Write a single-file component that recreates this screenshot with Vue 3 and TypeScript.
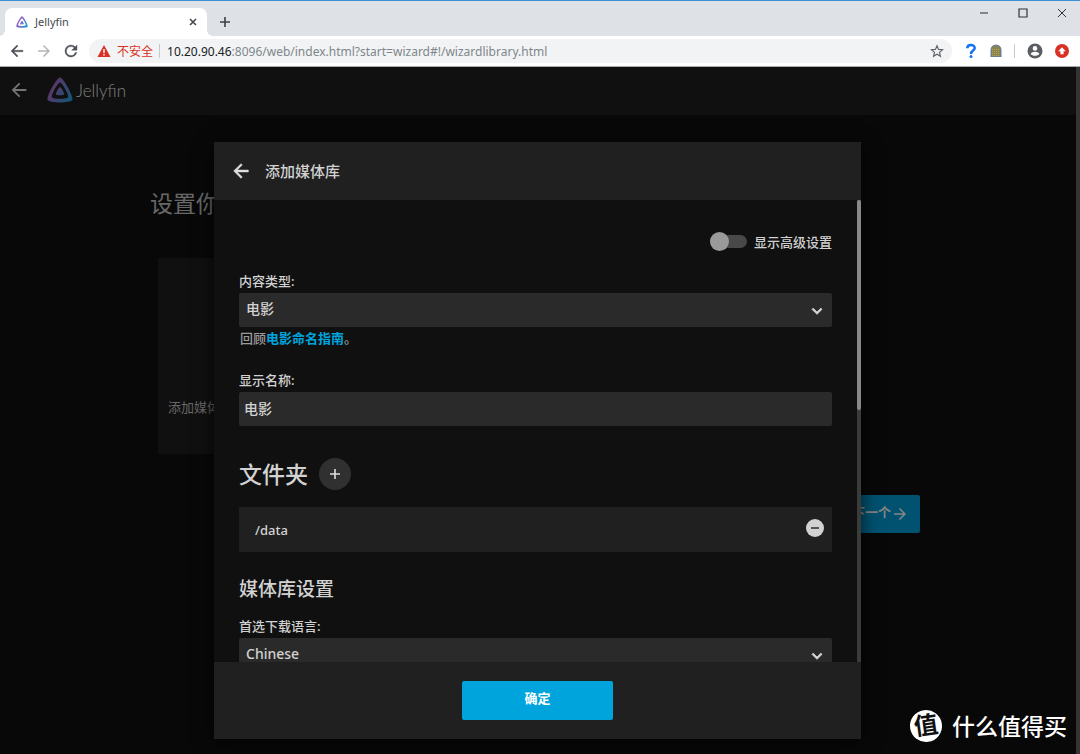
<script setup lang="ts">
import { ref } from 'vue'

const contentType = ref('电影')
const displayName = ref('电影')
const language = ref('Chinese')
const advanced = ref(false)
const folders = ref<string[]>(['/data'])

const arrow = 'M20 11H7.83l5.59-5.59L12 4l-8 8 8 8 1.41-1.41L7.83 13H20z'
const forward = 'M12 4l-1.41 1.41L16.17 11H4v2h12.17l-5.58 5.59L12 20l8-8z'
const chevron = 'M7.41 8.59 12 13.17l4.59-4.58L18 10l-6 6-6-6z'
const logoInner =
  'M190.56 329.07c8.63 17.3 122.4 17.12 130.93 0 8.52-17.1-47.9-119.78-65.46-119.8-17.57 0-74.1 102.5-65.47 119.8z'
const logoOuter =
  'M58.75 417.03c25.97 52.15 368.86 51.55 394.55 0S308.93 56.08 256.03 56.08c-52.92 0-223.25 308.8-197.28 360.95zm68.04-45.25c-17.02-34.17 94.6-236.5 129.26-236.5 34.67 0 146.1 202.7 129.26 236.5-16.83 33.8-241.5 34.17-258.52 0z'
</script>

<template>
  <div class="window">
    <header class="tabstrip">
      <div class="tab">
        <svg class="favicon" viewBox="48 48 416 416" aria-hidden="true">
          <defs>
            <linearGradient id="brand" gradientUnits="userSpaceOnUse" x1="110" y1="213" x2="497" y2="437">
              <stop offset="0" stop-color="#aa5cc3" />
              <stop offset="1" stop-color="#00a4dc" />
            </linearGradient>
          </defs>
          <path :d="logoInner" fill="url(#brand)" />
          <path :d="logoOuter" fill="url(#brand)" />
        </svg>
        <span class="tab-title">Jellyfin</span>
        <button class="icon-btn" aria-label="关闭标签页">
          <svg width="10" height="10" viewBox="0 0 10 10"><path d="M2 2l6 6M8 2L2 8" stroke="#45484c" stroke-width="1.6" /></svg>
        </button>
      </div>
      <button class="icon-btn new-tab" aria-label="新标签页">
        <svg width="12" height="12" viewBox="0 0 12 12"><path d="M6 1v10M1 6h10" stroke="#3c4043" stroke-width="1.6" /></svg>
      </button>
      <div class="window-controls">
        <button class="icon-btn" aria-label="最小化"><svg width="10" height="10" viewBox="0 0 10 10"><path d="M1 5h8" stroke="#666" stroke-width="1.5" /></svg></button>
        <button class="icon-btn" aria-label="最大化"><svg width="10" height="10" viewBox="0 0 10 10"><path d="M1 1h8v8H1z" fill="none" stroke="#333" stroke-width="1.2" /></svg></button>
        <button class="icon-btn" aria-label="关闭"><svg width="10" height="10" viewBox="0 0 10 10"><path d="M1 1l8 8M9 1L1 9" stroke="#333" /></svg></button>
      </div>
    </header>

    <nav class="toolbar">
      <button class="icon-btn" aria-label="后退"><svg width="18" height="18" viewBox="0 0 24 24"><path :d="arrow" fill="#4d5156" stroke="#4d5156" stroke-width=".5" /></svg></button>
      <button class="icon-btn" aria-label="前进"><svg width="18" height="18" viewBox="0 0 24 24"><path :d="forward" fill="#b4b6b9" /></svg></button>
      <button class="icon-btn" aria-label="重新加载"><svg width="18" height="18" viewBox="0 0 24 24"><path d="M17.65 6.35A7.96 7.96 0 0 0 12 4a8 8 0 1 0 7.73 10h-2.08A6 6 0 1 1 12 6c1.66 0 3.14.69 4.22 1.78L13 11h7V4z" fill="#4d5156" stroke="#4d5156" stroke-width=".5" /></svg></button>
      <div class="omnibox">
        <svg width="14" height="14" viewBox="0 0 14 14" aria-hidden="true"><path d="M7 1l6.500 12H.5z" fill="#d93025" /><path d="M7 5v4M7 10v1.500" stroke="#fff" stroke-width="1.4" /></svg>
        <span class="insecure">不安全</span>
        <span class="divider"></span>
        <span class="url"><b>10.20.90.46</b>:8096/web/index.html?start=wizard#!/wizardlibrary.html</span>
        <button class="icon-btn" aria-label="收藏">
          <svg width="14" height="14" viewBox="0 0 24 24"><path d="M12 3l2.600 6.200 6.900.600-5.200 4.500 1.600 6.700-5.900-3.600L6.100 21l1.600-6.700L2.500 9.800l6.900-.600z" fill="none" stroke="#5f6368" stroke-width="2" /></svg>
        </button>
      </div>
      <div class="extensions">
        <button class="icon-btn" aria-label="帮助">
          <svg width="14" height="16" viewBox="0 0 14 16"><path d="M3.300 5.200C3.300 1 10.700 1 10.700 5.100 10.700 7.600 7 7.700 7 11" fill="none" stroke="#1473f5" stroke-width="2.500" /><circle cx="7" cy="13.500" r="1.500" fill="#1473f5" /></svg>
        </button>
        <button class="icon-btn" aria-label="扩展程序">
          <svg width="12" height="14" viewBox="0 0 12 14"><path d="M.5 13V6a5.500 5.500 0 0 1 11 0v7z" fill="#6e7f8c" /><path d="M2 12V6a4 4 0 0 1 8 0v6z" fill="#8b8550" /><path d="M2 5.500h8M2 7.500h8M2 9.500h8M2 11.500h8" stroke="#b5a254" stroke-dasharray="1 1" /></svg>
        </button>
        <span class="divider"></span>
        <button class="icon-btn" aria-label="用户">
          <svg width="16" height="16" viewBox="0 0 16 16"><circle cx="8" cy="8" r="7.500" fill="#5a5e63" /><circle cx="8" cy="5.400" r="2.300" fill="#fff" /><path d="M3.600 10.800c1.300-2.900 7.500-2.900 8.800 0-1.900 2.700-6.900 2.700-8.800 0z" fill="#fff" /></svg>
        </button>
        <button class="icon-btn" aria-label="更新">
          <svg width="14" height="14" viewBox="0 0 14 14"><circle cx="7" cy="7" r="7" fill="#d93025" /><path d="M7 3.300l3.800 3.900H8.600v3.100H5.400V7.200H3.200z" fill="#fff" /></svg>
        </button>
      </div>
    </nav>

    <div class="page">
      <div class="app-bar">
        <button class="icon-btn" aria-label="返回"><svg width="22" height="22" viewBox="0 0 24 24"><path :d="arrow" fill="#747474" /></svg></button>
        <svg class="brand-logo" viewBox="48 48 416 416" aria-hidden="true">
          <path :d="logoInner" fill="url(#brand)" />
          <path :d="logoOuter" fill="url(#brand)" />
        </svg>
        <span class="brand-name">Jellyfin</span>
      </div>
      <main class="wizard">
        <h1>设置你的媒体库</h1>
        <button class="card">添加媒体库</button>
        <button class="next"><span>下一个</span><svg width="18" height="18" viewBox="0 0 24 24"><path :d="forward" fill="#868686" /></svg></button>
      </main>

      <div class="backdrop">
        <section class="dialog" role="dialog" aria-labelledby="dialog-title">
          <header class="dialog-head">
            <button class="icon-btn" aria-label="返回"><svg width="22" height="22" viewBox="0 0 24 24"><path :d="arrow" fill="#dedede" stroke="#dedede" stroke-width=".6" /></svg></button>
            <h2 id="dialog-title">添加媒体库</h2>
          </header>

          <div class="scroller">
            <form class="form" @submit.prevent>
              <label class="toggle">
                <input v-model="advanced" type="checkbox" />
                <span class="switch"></span>
                显示高级设置
              </label>

              <div class="field">
                <label for="type">内容类型:</label>
                <div class="select">
                  <select id="type" v-model="contentType"><option>电影</option></select>
                  <svg width="20" height="20" viewBox="0 0 24 24"><path :d="chevron" fill="#d5d5d5" stroke="#d5d5d5" /></svg>
                </div>
                <p class="hint">回顾<a href="#naming">电影命名指南</a>。</p>
              </div>

              <div class="field name-field">
                <label for="name">显示名称:</label>
                <input id="name" v-model="displayName" type="text" />
              </div>

              <div class="folder-head">
                <h1>文件夹</h1>
                <button class="add" type="button" aria-label="添加文件夹"><svg width="12" height="12" viewBox="0 0 12 12"><path d="M6 1v10M1 6h10" stroke="#dedede" stroke-width="1.6" /></svg></button>
              </div>
              <ul class="folders">
                <li v-for="folder in folders" :key="folder">
                  <span>{{ folder }}</span>
                  <button class="icon-btn" type="button" aria-label="移除"><svg width="18" height="18" viewBox="0 0 18 18"><circle cx="9" cy="9" r="9" fill="#d2d2d2" /><path d="M5 9h8" stroke="#555" stroke-width="2" /></svg></button>
                </li>
              </ul>

              <h2 class="section">媒体库设置</h2>
              <div class="field">
                <label for="lang">首选下载语言:</label>
                <div class="select">
                  <select id="lang" v-model="language"><option>Chinese</option></select>
                  <svg width="20" height="20" viewBox="0 0 24 24"><path :d="chevron" fill="#d5d5d5" stroke="#d5d5d5" /></svg>
                </div>
              </div>
            </form>
            <div class="track"><div class="thumb"></div></div>
          </div>

          <footer class="dialog-foot"><button class="ok">确定</button></footer>
        </section>
      </div>
      <div class="page-scroll"></div>
    </div>

    <div class="watermark"><span class="seal">值</span>什么值得买</div>
  </div>
</template>

<style>
body {
  margin: 0;
  background: #080808;
}
</style>

<style scoped>
* {
  box-sizing: border-box;
}
.window {
  position: relative;
  display: flex;
  flex-direction: column;
  height: 100vh;
  overflow: hidden;
  font-family: "Noto Sans", "Noto Sans CJK SC", sans-serif;
  font-size: 13px;
}
h1, h2, p, ul {
  margin: 0;
  padding: 0;
  font-weight: inherit;
}
button, input, select {
  margin: 0;
  border: 0;
  font: inherit;
  color: inherit;
}
svg {
  display: block;
  flex: none;
}
.icon-btn {
  display: flex;
  align-items: center;
  justify-content: center;
  padding: 0;
  background: none;
}

/* browser frame */
.tabstrip {
  display: flex;
  align-items: flex-start;
  flex: none;
  height: 36px;
  padding-left: 5px;
  border-top: 1px solid #3a8fd6;
  background: #dee1e6;
}
.tab {
  position: relative;
  display: flex;
  align-items: center;
  width: 202px;
  height: 28px;
  margin-top: 7px;
  padding: 0 9px 0 11px;
  border-radius: 7px 7px 0 0;
  background: #fff;
}
.tab::before,
.tab::after {
  content: "";
  position: absolute;
  bottom: 0;
  width: 6px;
  height: 6px;
}
.tab::before {
  right: 100%;
  background: radial-gradient(circle at 0 0, #dee1e6 6px, #fff 6px);
}
.tab::after {
  left: 100%;
  background: radial-gradient(circle at 100% 0, #dee1e6 6px, #fff 6px);
}
.favicon {
  width: 12px;
  height: 12px;
}
.tab-title {
  flex: 1;
  margin-left: 7px;
  font-size: 11px;
  line-height: 16px;
  padding-bottom: 1px;
  color: #45484c;
}
.new-tab {
  margin: 15px 0 0 12px;
}
.window-controls {
  display: flex;
  gap: 29px;
  margin: 7px 13px 0 auto;
}
.toolbar {
  display: flex;
  align-items: center;
  gap: 9px;
  flex: none;
  height: 31px;
  padding: 0 11px 0 8px;
  border-bottom: 1px solid #a9abad;
  background: #fff;
}
.omnibox {
  display: flex;
  align-items: center;
  flex: 1;
  height: 24px;
  padding: 0 8px;
  border-radius: 12px;
  background: #f1f3f4;
  font-size: 12px;
}
.insecure {
  margin-left: 6px;
  color: #d93025;
}
.divider {
  width: 1px;
  height: 14px;
  background: #c6c9cc;
}
.omnibox .divider {
  margin: 0 7px 0 6px;
}
.url {
  flex: 1;
  color: #80868b;
  white-space: nowrap;
}
.url b {
  font-weight: 400;
  color: #202124;
}
.extensions {
  display: flex;
  align-items: center;
  gap: 12px;
  margin-left: 3px;
}

/* dimmed page */
.page {
  position: relative;
  flex: 1;
  min-height: 0;
  background: #080808;
}
.app-bar {
  display: flex;
  align-items: center;
  height: 48px;
  padding: 0 0 2px 8px;
  background: #101010;
}
.brand-logo {
  width: 26px;
  height: 26px;
  margin-left: 17px;
  opacity: 0.5;
}
.brand-name {
  margin-left: 3px;
  font-family: Lato, sans-serif;
  font-size: 17px;
  font-weight: 300;
  color: #808080;
}
.wizard {
  display: flex;
  flex-direction: column;
  padding: 71px 160px 0 150px;
  color: #686868;
}
.wizard h1 {
  font-size: 23px;
  line-height: 34px;
}
.card {
  align-self: flex-start;
  width: 300px;
  height: 196px;
  margin: 38px 0 0 8px;
  padding: 0 10px;
  padding-top: 101px;
  background: #101010;
  text-align: left;
}
.next {
  display: flex;
  align-items: center;
  align-self: flex-end;
  justify-content: flex-end;
  width: 110px;
  height: 38px;
  margin-top: 41px;
  padding: 0 11px 0 0;
  border-radius: 2px;
  background: #005270;
  color: #868686;
  font-weight: 600;
}
.next span {
  padding-bottom: 5px;
}
.backdrop {
  position: absolute;
  inset: 0;
  display: flex;
  padding: 75px 219px 15px 214px;
}
.page-scroll {
  position: absolute;
  inset: 0 0 0 auto;
  width: 4px;
  background: #343434;
}

/* dialog */
.dialog {
  display: flex;
  flex: 1;
  flex-direction: column;
  min-width: 0;
  background: #101010;
  box-shadow: 0 4px 18px rgba(0, 0, 0, 0.7);
  color: #d2d2d2;
  font-weight: 500;
}
.dialog-head {
  display: flex;
  align-items: center;
  flex: none;
  gap: 13px;
  height: 58px;
  padding-left: 16px;
  background: #202020;
}
.dialog-head h2 {
  padding-bottom: 2px;
  font-size: 15px;
}
.scroller {
  display: flex;
  flex: 1;
  min-height: 0;
  overflow: hidden;
}
.form {
  flex: 1;
  padding: 31px 25px 0;
}
.track {
  width: 4px;
  background: #3b3b3b;
}
.thumb {
  height: 210px;
  border-radius: 2px;
  background: #888;
}
.toggle {
  display: flex;
  align-items: center;
  justify-content: flex-end;
  height: 20px;
}
.toggle input {
  position: absolute;
  opacity: 0;
}
.switch {
  display: flex;
  align-items: center;
  width: 37px;
  height: 13px;
  margin-right: 7px;
  border-radius: 7px;
  background: #484848;
}
.switch::before {
  content: "";
  width: 19px;
  height: 19px;
  border-radius: 50%;
  background: #9a9a9a;
}
.field label {
  display: block;
  margin-bottom: 3px;
  line-height: 18px;
}
.toggle + .field {
  margin-top: 21px;
}
.select {
  position: relative;
}
.select select,
.field input {
  display: block;
  appearance: none;
  width: 100%;
  height: 34px;
  padding: 0 7px 3px;
  border-radius: 2px;
  background: #2a2a2a;
  font-size: 14px;
}
.field input {
  padding: 0 5px 3px;
}
.select svg {
  position: absolute;
  top: 8px;
  right: 5px;
  pointer-events: none;
}
.hint {
  margin: 2px 0 0 1px;
  line-height: 18px;
  color: #9a9a9a;
}
.hint a {
  color: #00a4dc;
  font-weight: 700;
  text-decoration: none;
}
.name-field {
  margin-top: 24px;
}
.folder-head {
  display: flex;
  align-items: center;
  gap: 11px;
  height: 32px;
  margin-top: 32px;
}
.folder-head h1 {
  padding-bottom: 2px;
  font-size: 23px;
}
.add {
  display: flex;
  align-items: center;
  justify-content: center;
  width: 32px;
  height: 32px;
  padding: 0;
  border-radius: 50%;
  background: #303030;
}
.folders {
  margin-top: 17px;
  list-style: none;
}
.folders li {
  display: flex;
  align-items: center;
  justify-content: space-between;
  height: 45px;
  padding: 0 8px 0 16px;
  background: #202020;
}
.folders .icon-btn {
  padding-bottom: 3px;
}
.section {
  margin: 23px 0 14px;
  font-size: 19px;
  line-height: 28px;
}
.dialog-foot {
  display: flex;
  align-items: center;
  justify-content: center;
  flex: none;
  height: 77px;
  background: #202020;
}
.ok {
  width: 151px;
  height: 39px;
  padding: 0 0 6px;
  border-radius: 2px;
  background: #00a4dc;
  color: #fff;
  font-weight: 700;
}

.watermark {
  position: absolute;
  right: 13px;
  bottom: 12px;
  display: flex;
  align-items: center;
  gap: 10px;
  height: 32px;
  font-size: 23px;
  font-weight: 500;
  line-height: 32px;
  color: #fff;
}
.seal {
  width: 32px;
  height: 32px;
  border-radius: 50%;
  background: #fff;
  color: #111;
  font-size: 24px;
  font-weight: 600;
  line-height: 30px;
  text-align: center;
  transform: rotate(-8deg);
}
</style>
